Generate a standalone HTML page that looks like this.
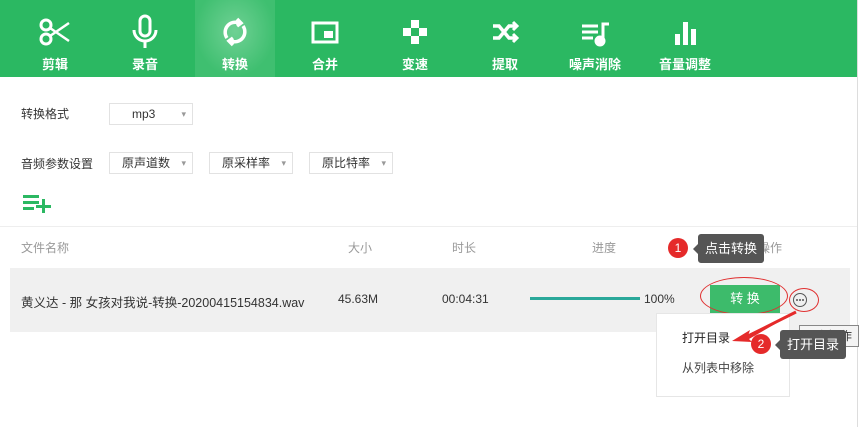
<!DOCTYPE html>
<html><head><meta charset="utf-8"><style>
body{margin:0;width:867px;height:427px;overflow:hidden;background:#fff;font-family:"Liberation Sans","Noto Sans CJK SC",sans-serif;position:relative;font-size:12px;color:#333}
.hdr{position:absolute;left:0;top:0;width:857px;height:77px;background:#2bb862}
.tab{position:absolute;top:0;width:80px;height:77px;text-align:center;color:#fff}
.tab.act{background:radial-gradient(ellipse at 50% 40%,#6fd194,#3fbf70 70%)}
.tab svg{position:absolute;left:22px;top:14px}
.tab span{position:absolute;left:0;right:0;top:54px;font-size:13px;font-weight:bold}
.a{position:absolute;white-space:nowrap}
.sel{position:absolute;height:20px;border:1px solid #e2e2e2;background:#fff;font-size:12px;line-height:20px;color:#333}
.sel:after{content:"▾";position:absolute;right:6px;top:0;font-size:9px;color:#999}
.gray{color:#999}
</style></head><body>
<div class="hdr">
<div class="tab" style="left:15px"><svg width="36" height="36" viewBox="0 0 36 36" fill="none" stroke="#fff" stroke-width="3"><circle cx="9" cy="11" r="5"/><circle cx="9" cy="25" r="5"/><path d="M13 14L32 27M13 22L32 9" stroke-width="2.5"/></svg><span>剪辑</span></div>
<div class="tab" style="left:105px"><svg width="36" height="36" viewBox="0 0 36 36" fill="none" stroke="#fff" stroke-width="3"><rect x="13" y="2" width="10" height="20" rx="5"/><path d="M7 16a11 11 0 0 0 22 0M18 27v7"/></svg><span>录音</span></div>
<div class="tab act" style="left:195px"><svg width="36" height="36" viewBox="0 0 36 36" fill="none" stroke="#fff" stroke-width="3.5"><path d="M10 24a10 10 0 0 1 12-15M26 12a10 10 0 0 1-12 15"/><path d="M20 5l4 4-4 3M16 31l-4-4 4-3" fill="#fff"/></svg><span>转换</span></div>
<div class="tab" style="left:285px"><svg width="36" height="36" viewBox="0 0 36 36" fill="none" stroke="#fff" stroke-width="3"><rect x="6" y="9" width="24" height="19"/><rect x="17" y="17" width="9" height="7" fill="#fff" stroke="none"/></svg><span>合并</span></div>
<div class="tab" style="left:375px"><svg width="36" height="36" viewBox="0 0 36 36" fill="#fff"><rect x="14" y="6" width="8" height="8"/><rect x="14" y="22" width="8" height="8"/><rect x="6" y="14" width="8" height="8"/><rect x="22" y="14" width="8" height="8"/></svg><span>变速</span></div>
<div class="tab" style="left:465px"><svg width="36" height="36" viewBox="0 0 36 36" fill="none" stroke="#fff" stroke-width="3.5"><path d="M6 12h6l10 12h6M6 24h6l10-12h6"/><path d="M26 8l4 4-4 4M26 20l4 4-4 4" stroke-width="3"/></svg><span>提取</span></div>
<div class="tab" style="left:555px"><svg width="36" height="36" viewBox="0 0 36 36" fill="none" stroke="#fff" stroke-width="3"><path d="M5 12h16M5 18h16M5 24h11M26 27V10h6"/><circle cx="23" cy="27" r="4" fill="#fff"/></svg><span>噪声消除</span></div>
<div class="tab" style="left:645px"><svg width="36" height="36" viewBox="0 0 36 36" fill="#fff"><rect x="8" y="20" width="5" height="11"/><rect x="16" y="8" width="5" height="23"/><rect x="24" y="15" width="5" height="16"/></svg><span>音量调整</span></div>
</div>
<div class="a" style="left:857px;top:0;width:1px;height:427px;background:#ddd"></div>
<div class="a" style="left:21px;top:105px">转换格式</div>
<div class="sel" style="left:109px;top:103px;width:82px"><span style="margin-left:22px">mp3</span></div>
<div class="a" style="left:21px;top:155px">音频参数设置</div>
<div class="sel" style="left:109px;top:152px;width:82px"><span style="margin-left:12px">原声道数</span></div>
<div class="sel" style="left:209px;top:152px;width:82px"><span style="margin-left:12px">原采样率</span></div>
<div class="sel" style="left:309px;top:152px;width:82px"><span style="margin-left:12px">原比特率</span></div>
<svg class="a" style="left:23px;top:193px" width="28" height="20" viewBox="0 0 28 20" fill="#2bb862"><rect x="0" y="2" width="16" height="3"/><rect x="0" y="8" width="16" height="3"/><rect x="0" y="14" width="11" height="3"/><rect x="13" y="12" width="15" height="3"/><rect x="19" y="6" width="3" height="14"/></svg>
<div class="a" style="left:0;top:226px;width:857px;height:1px;background:#eee"></div>
<div class="a gray" style="left:21px;top:239px">文件名称</div>
<div class="a gray" style="left:348px;top:239px">大小</div>
<div class="a gray" style="left:452px;top:239px">时长</div>
<div class="a gray" style="left:592px;top:239px">进度</div>
<div class="a gray" style="left:758px;top:239px">操作</div>
<div class="a" style="left:10px;top:268px;width:840px;height:64px;background:#f0f0f0"></div>
<div class="a" style="left:21px;top:292px;font-size:12.5px">黄义达 - 那 女孩对我说-转换-20200415154834.wav</div>
<div class="a" style="left:338px;top:292px">45.63M</div>
<div class="a" style="left:442px;top:292px">00:04:31</div>
<div class="a" style="left:530px;top:297px;width:110px;height:3px;background:#2aa89a"></div>
<div class="a" style="left:644px;top:292px">100%</div>
<div class="a" style="left:710px;top:285px;width:70px;height:28px;background:#3dbb6b;color:#fff;text-align:center;line-height:28px;font-size:13px">转 换</div>
<div class="a" style="left:700px;top:277px;width:86px;height:36px;border:1px solid #e03030;border-radius:50%"></div>
<svg class="a" style="left:792px;top:292px" width="16" height="16" viewBox="0 0 16 16"><circle cx="8" cy="8" r="6.5" fill="none" stroke="#555"/><circle cx="5" cy="8" r="1" fill="#555"/><circle cx="8" cy="8" r="1" fill="#555"/><circle cx="11" cy="8" r="1" fill="#555"/></svg>
<div class="a" style="left:789px;top:288px;width:28px;height:22px;border:1px solid #e03030;border-radius:50%"></div>
<div class="a" style="left:799px;top:325px;width:54px;height:20px;background:#f4f4f4;border:1px solid #888;font-size:12px;line-height:20px;padding-left:4px">更多操作</div>
<div class="a" style="left:656px;top:313px;width:132px;height:82px;background:#fff;border:1px solid #e6e6e6"></div>
<div class="a" style="left:682px;top:329px;color:#222">打开目录</div>
<div class="a" style="left:682px;top:359px;color:#444">从列表中移除</div>
<div class="a" style="left:698px;top:234px;width:66px;height:29px;background:#555;border-radius:3px;color:#fff;font-size:13px;line-height:29px;text-align:center">点击转换</div>
<div class="a" style="left:693px;top:244px;border:5px solid transparent;border-right-color:#555;border-left:0"></div>
<div class="a" style="left:668px;top:238px;width:20px;height:20px;border-radius:50%;background:#e52a2a;color:#fff;text-align:center;line-height:20px">1</div>
<div class="a" style="left:780px;top:330px;width:66px;height:29px;background:#555;border-radius:3px;color:#fff;font-size:13px;line-height:29px;text-align:center">打开目录</div>
<div class="a" style="left:775px;top:340px;border:5px solid transparent;border-right-color:#555;border-left:0"></div>
<div class="a" style="left:751px;top:334px;width:20px;height:20px;border-radius:50%;background:#e52a2a;color:#fff;text-align:center;line-height:20px">2</div>
<svg class="a" style="left:730px;top:310px" width="70" height="35" viewBox="0 0 70 35"><path d="M66 2L18 26l2-6-18 11 20 1-3-3z" fill="#e52a2a"/><path d="M66 2L18 26" stroke="#e52a2a" stroke-width="3"/></svg>
</body></html>
